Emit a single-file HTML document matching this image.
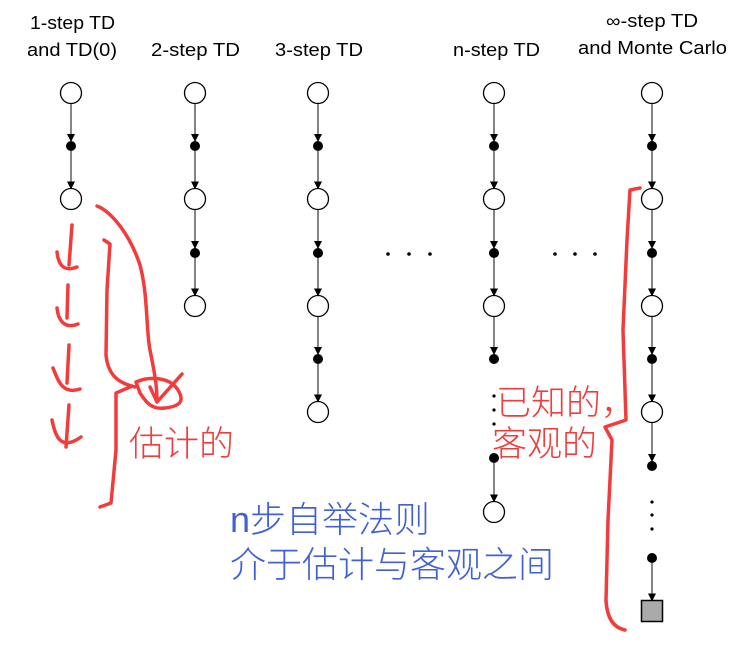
<!DOCTYPE html>
<html><head><meta charset="utf-8"><style>
html,body{margin:0;padding:0;background:#fff;width:756px;height:655px;overflow:hidden}
svg{display:block}
.h{font-family:"Liberation Sans",sans-serif;font-size:18px;fill:#000}
.r{font-family:"Liberation Sans","Noto Sans CJK SC",sans-serif;font-size:35px;font-weight:300;fill:#f23c3c}
.b{font-family:"Liberation Sans","Noto Sans CJK SC",sans-serif;font-size:36px;font-weight:300;fill:#4060d4}
.p{fill:none;stroke:#f23c3c;stroke-width:3.5;stroke-linecap:round;stroke-linejoin:round}
</style></head><body>
<svg id="s" width="756" height="655" xmlns="http://www.w3.org/2000/svg">
<defs><marker id="a" markerWidth="8" markerHeight="10" refX="7" refY="5" orient="auto" markerUnits="userSpaceOnUse"><path d="M0,1 L8,5 L0,9z" fill="#000"/></marker></defs>
<text class="h" x="30" y="29" textLength="85" lengthAdjust="spacingAndGlyphs">1-step TD</text>
<text class="h" x="27" y="56" textLength="90" lengthAdjust="spacingAndGlyphs">and TD(0)</text>
<text class="h" x="151" y="56" textLength="89" lengthAdjust="spacingAndGlyphs">2-step TD</text>
<text class="h" x="275" y="56" textLength="88" lengthAdjust="spacingAndGlyphs">3-step TD</text>
<text class="h" x="453" y="56" textLength="87" lengthAdjust="spacingAndGlyphs">n-step TD</text>
<text class="h" x="606" y="27" textLength="92" lengthAdjust="spacingAndGlyphs">∞-step TD</text>
<text class="h" x="578" y="54" textLength="149" lengthAdjust="spacingAndGlyphs">and Monte Carlo</text>
<g id="g"></g>
<path class="p" d="M97,206 C112,212 130,235 140,265 C148,295 146,330 150,350 C154,370 157,385 157,400"/>
<path class="p" d="M104,240 L110,244 L107,290 L106,355 C108,375 118,383 135,387"/>
<path class="p" d="M130,387 L116,393 L116,450 L111,503 L100,507"/>
<path class="p" d="M136,382 C150,376 170,377 178,390 C184,400 182,406 165,408 C150,410 145,400 140,393 Z"/>
<path class="p" d="M150,387 L157,402 L182,374"/>
<path class="p" d="M72,225 L69,265 M57,252 C58,262 62,273 77,267"/>
<path class="p" d="M68,285 L67,318 M57,308 C58,318 63,330 78,324"/>
<path class="p" d="M69,345 L67,383 M53,368 C58,380 62,395 80,389"/>
<path class="p" d="M69,405 L66,447 M52,420 C55,435 60,452 81,437"/>
<path class="p" d="M640,188 L630,190 L627,240 L623,330 L626,420 L605,427 L612,440 L608,520 L606,600 C607,620 615,628 625,630"/>
<text class="r" x="129" y="456">估计的</text>
<text class="r" x="496" y="415">已知的，</text>
<text class="r" x="492" y="456">客观的</text>
<text class="b" x="230" y="532">n步自举法则</text>
<text class="b" x="230" y="577">介于估计与客观之间</text>
</svg>
<script>
var g=document.getElementById('g'),h='';
function C(x,y){h+='<circle cx="'+x+'" cy="'+y+'" r="10.5" fill="#fff" stroke="#000" stroke-width="1.3"/>';}
function D(x,y){h+='<circle cx="'+x+'" cy="'+y+'" r="5" fill="#000"/>';}
function S(x,y){h+='<rect x="'+(x-10.5)+'" y="'+(y-10.5)+'" width="21" height="21" fill="#aaa" stroke="#000" stroke-width="1.5"/>';}
function A(x,y1,y2){h+='<line x1="'+x+'" y1="'+y1+'" x2="'+x+'" y2="'+y2+'" stroke="#333" stroke-width="1.2" marker-end="url(#a)"/>';}
function sd(x,ys){ys.forEach(function(y){h+='<circle cx="'+x+'" cy="'+y+'" r="1.6" fill="#000"/>';});}
function col(x,seq){
 for(var i=0;i<seq.length;i++){var t=seq[i][0],y=seq[i][1];
  if(i<seq.length-1){var n=seq[i+1];if(n[0]!='v'&&t!='v'){A(x,y+(t=='c'?10.5:5),n[1]-(n[0]=='d'?5:10.5));}}
 }
 seq.forEach(function(s){if(s[0]=='c')C(x,s[1]);else if(s[0]=='d')D(x,s[1]);else if(s[0]=='q')S(x,s[1]);else sd(x,s[1]);});
}
col(71,[['c',93],['d',146],['c',199]]);
col(195,[['c',93],['d',146],['c',199],['d',253],['c',306]]);
col(318,[['c',93],['d',146],['c',199],['d',253],['c',306],['d',359],['c',412]]);
col(494,[['c',93],['d',146],['c',199],['d',253],['c',306],['d',359],['v',[396,410,424]],['d',458],['c',512]]);
col(652,[['c',93],['d',146],['c',199],['d',253],['c',306],['d',359],['c',412],['d',466],['v',[502,515,529]],['d',558],['q',611]]);
[388,409,430,555,575,595].forEach(function(x){h+='<circle cx="'+x+'" cy="254" r="1.8" fill="#000"/>';});
g.innerHTML=h;
</script>
</body></html>
